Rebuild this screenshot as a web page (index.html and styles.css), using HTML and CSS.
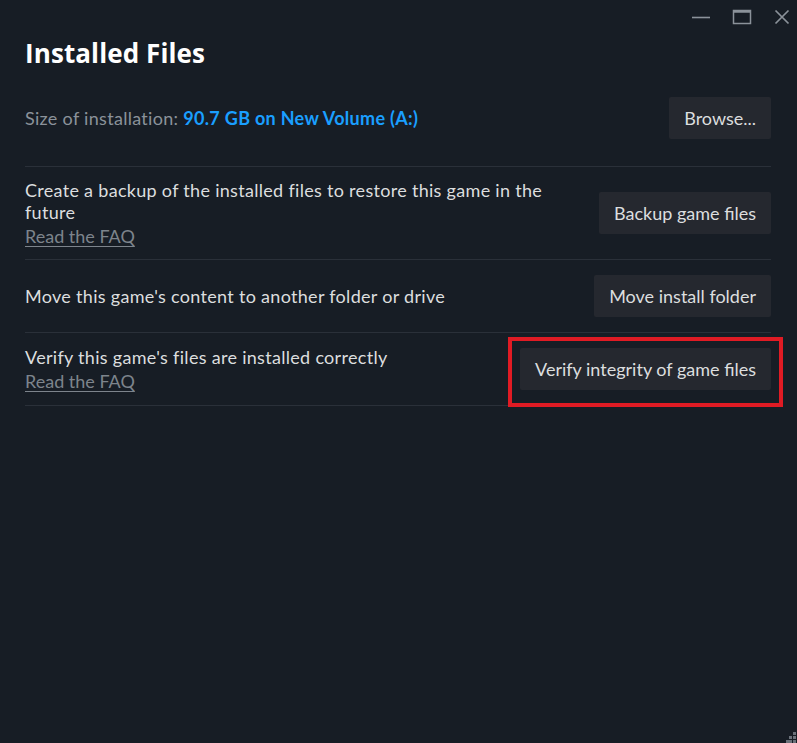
FILE: index.html
```html
<!DOCTYPE html>
<html lang="en">
<head>
<meta charset="utf-8">
<title>Installed Files</title>
<link rel="stylesheet" href="styles.css">
</head>
<body>
<div class="window">
  <div class="titlebar">
    <svg class="ctl" width="20" height="16" viewBox="0 0 20 16"><line x1="1" y1="8.5" x2="19" y2="8.5" stroke="#8b929a" stroke-width="1.6"/></svg>
    <svg class="ctl" width="20" height="16" viewBox="0 0 20 16"><rect x="1.5" y="1.5" width="17" height="13" fill="none" stroke="#8b929a" stroke-width="1.5"/><line x1="1.5" y1="2.5" x2="18.5" y2="2.5" stroke="#8b929a" stroke-width="2.5"/></svg>
    <svg class="ctl" width="16" height="16" viewBox="0 0 16 16"><path d="M1.5 1.5 L14.5 14.5 M14.5 1.5 L1.5 14.5" stroke="#8b929a" stroke-width="1.7" fill="none"/></svg>
  </div>
  <div class="content">
    <h1 class="title">Installed Files</h1>
    <div class="row row-size">
      <div class="text">
        <span class="muted">Size of installation: </span><span class="link">90.7 GB on New Volume (A:)</span>
      </div>
      <button class="btn">Browse...</button>
    </div>
    <div class="row">
      <div class="text">
        <div>Create a backup of the installed files to restore this game in the future</div>
        <a class="faq">Read the FAQ</a>
      </div>
      <button class="btn">Backup game files</button>
    </div>
    <div class="row">
      <div class="text">
        <div>Move this game's content to another folder or drive</div>
      </div>
      <button class="btn">Move install folder</button>
    </div>
    <div class="row">
      <div class="text">
        <div>Verify this game's files are installed correctly</div>
        <a class="faq">Read the FAQ</a>
      </div>
      <div class="highlight-wrap">
        <button class="btn">Verify integrity of game files</button>
        <span class="highlight"></span>
      </div>
    </div>
  </div>
  <div class="grip">
    <svg width="14" height="22" viewBox="0 0 14 22">
      <g fill="#6b717a">
        <rect x="11" y="7" width="3" height="3"/>
        <rect x="7" y="11" width="3" height="3"/>
        <rect x="11" y="11" width="3" height="3"/>
        <rect x="3" y="15" width="3" height="3"/>
        <rect x="7" y="15" width="3" height="3"/>
        <rect x="11" y="15" width="3" height="3"/>
        <rect x="0" y="19" width="3" height="3"/>
        <rect x="3" y="19" width="3" height="3"/>
        <rect x="7" y="19" width="3" height="3"/>
        <rect x="11" y="19" width="3" height="3"/>
      </g>
    </svg>
  </div>
</div>
</body>
</html>
```
FILE: styles.css
```css
html, body {
  margin: 0;
  padding: 0;
  background: #171d25;
}
body {
  font-family: Lato, "Noto Sans", sans-serif;
  color: #dcdedf;
}
.window {
  width: 797px;
  height: 743px;
  display: flex;
  flex-direction: column;
  overflow: hidden;
}
.titlebar {
  height: 34px;
  display: flex;
  justify-content: flex-end;
  align-items: center;
  padding-right: 7px;
}
.ctl {
  display: block;
}
.ctl:nth-child(1) { margin-right: 21px; }
.ctl:nth-child(2) { margin-right: 22px; }
.content {
  padding: 0 26px 0 25px;
  flex: 1;
}
.title {
  margin: 4px 0 14px;
  font-family: "Open Sans", Lato, sans-serif;
  font-size: 26px;
  line-height: 30px;
  font-weight: 700;
  color: #ffffff;
  letter-spacing: 0.1px;
}
.row {
  display: flex;
  align-items: center;
  justify-content: space-between;
  gap: 20px;
  box-sizing: border-box;
  min-height: 73px;
  padding: 12px 0;
  border-bottom: 1px solid #2a3039;
  font-size: 18px;
  line-height: 22px;
  letter-spacing: 0.3px;
}
.row-size {
  min-height: 0;
  padding: 15px 0 27px;
}
.text {
  flex: 1;
  max-width: 545px;
}
.muted {
  color: #8b929a;
}
.link {
  color: #1a9fff;
  font-weight: 700;
}
.faq {
  display: block;
  margin-top: 2px;
  color: #7d848c;
  letter-spacing: 0;
  text-decoration: underline;
  text-underline-offset: 3px;
}
.btn {
  flex: none;
  height: 42px;
  padding: 0 15px;
  border: none;
  border-radius: 2px;
  background: #25282f;
  color: #dcdedf;
  font-family: inherit;
  font-size: 18px;
  letter-spacing: 0;
}
.highlight-wrap {
  position: relative;
  display: flex;
}
.highlight {
  position: absolute;
  top: -11px;
  left: -12px;
  right: -12px;
  bottom: -17px;
  border: 4px solid #e01b24;
  pointer-events: none;
}
.grip {
  display: flex;
  justify-content: flex-end;
  margin-right: -3px;
  height: 22px;
}
.grip svg { display: block; }
```
